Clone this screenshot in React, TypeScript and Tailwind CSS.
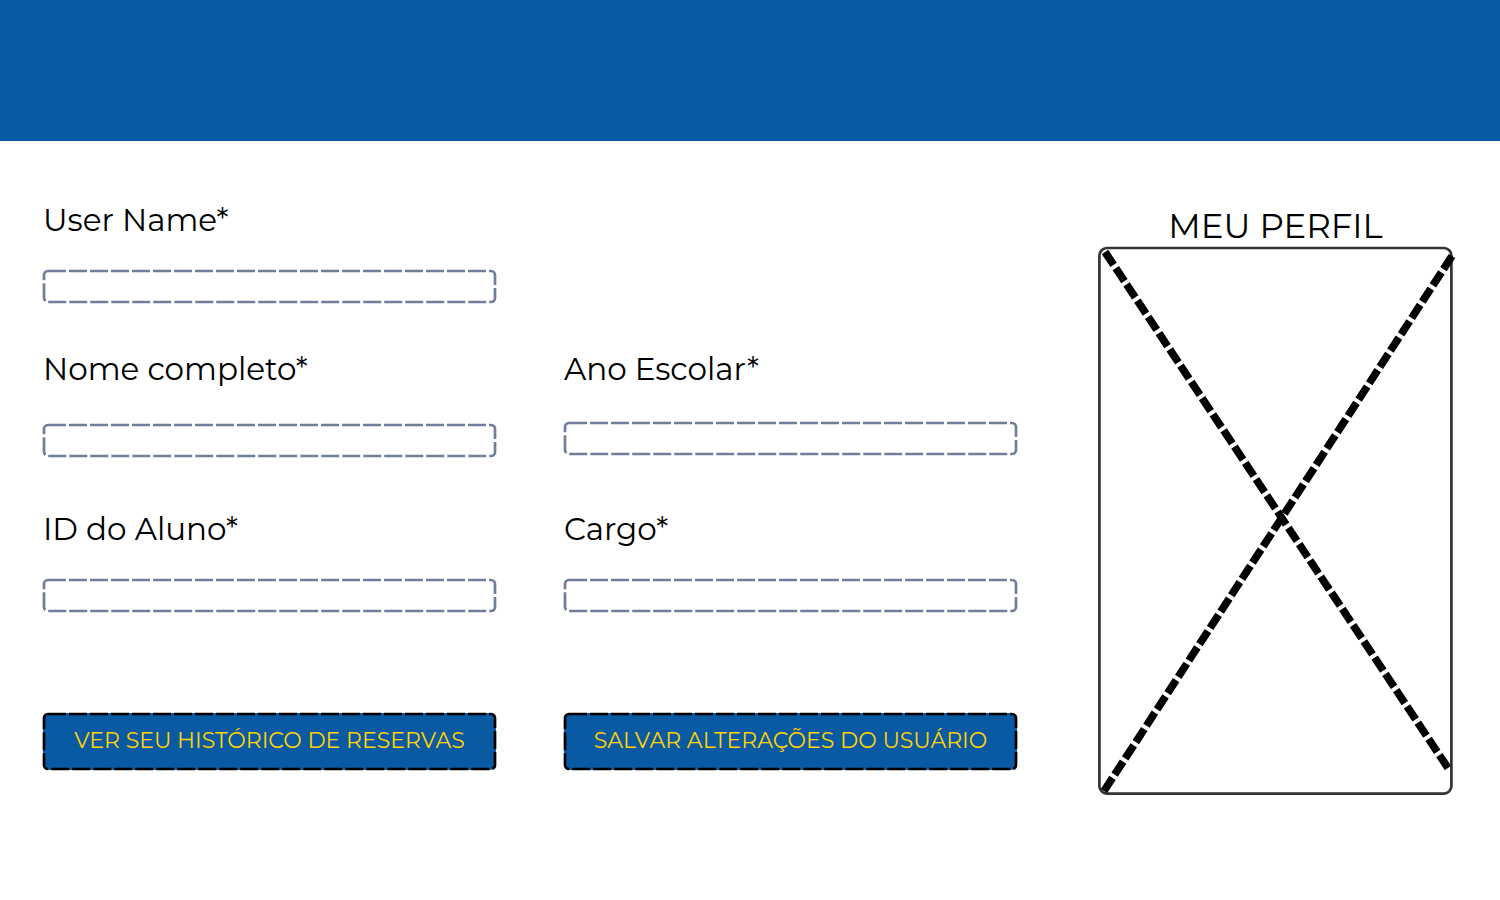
import type { ReactNode } from 'react';

function DashedBorder({ className }: { className: string }) {
  return (
    <span className="pointer-events-none absolute inset-px" aria-hidden="true">
      <svg className={`block h-full w-full overflow-visible ${className}`}>
        <rect
          width="100%"
          height="100%"
          rx="4"
          fill="none"
          stroke="currentColor"
          strokeWidth="2.7"
          strokeDasharray="18 3"
        />
      </svg>
    </span>
  );
}

function Field({ id, label, gap = 'gap-[30px]' }: { id: string; label: string; gap?: string }) {
  return (
    <div className={`flex flex-col ${gap}`}>
      <label htmlFor={id} className="text-[31px] leading-10 whitespace-nowrap">
        {label}
      </label>
      <div className="relative h-[33px]">
        <input
          id={id}
          name={id}
          type="text"
          className="block h-full w-full rounded-md bg-transparent px-3 text-base outline-none"
        />
        <DashedBorder className="text-[#707d9b]" />
      </div>
    </div>
  );
}

function ActionButton({ children }: { children: ReactNode }) {
  return (
    <button
      type="button"
      className="relative h-[57px] w-full cursor-pointer rounded-md bg-[#0a5aa3] pb-0.5 text-[22px] whitespace-nowrap text-[#ffd200]"
    >
      {children}
      <DashedBorder className="text-black" />
    </button>
  );
}

function ProfilePlaceholder() {
  return (
    <svg viewBox="0 0 355 548" className="block h-auto w-full overflow-visible" aria-hidden="true">
      <rect x="1.4" y="1" width="352" height="545.6" rx="7.5" fill="none" stroke="#333333" strokeWidth="2.7" />
      <g stroke="#000000" strokeWidth="7.7" strokeDasharray="4 1">
        <line x1="7" y1="5" x2="350" y2="521" pathLength="159" />
        <line x1="6" y1="544" x2="354" y2="9" pathLength="164" />
      </g>
    </svg>
  );
}

export default function App() {
  return (
    <div className="min-h-screen bg-white font-['Montserrat','Inter',sans-serif] text-black">
      <header className="h-[141px] bg-[#0a5aa3]" />
      <main className="grid grid-cols-[974fr_355fr] items-start gap-x-[81px] pr-[47px] pb-10 pl-[43px]">
        <form className="grid grid-cols-2 gap-x-[68px] pt-[59px]">
          <div className="col-start-1">
            <Field id="username" label="User Name*" />
          </div>
          <div className="col-start-1 pt-[46px]">
            <Field id="fullname" label="Nome completo*" gap="gap-[35px]" />
          </div>
          <div className="pt-[46px]">
            <Field id="year" label="Ano Escolar*" gap="gap-[33px]" />
          </div>
          <div className="pt-[52px]">
            <Field id="student" label="ID do Aluno*" />
          </div>
          <div className="pt-[52px]">
            <Field id="role" label="Cargo*" />
          </div>
          <div className="pt-[101px]">
            <ActionButton>VER SEU HISTÓRICO DE RESERVAS</ActionButton>
          </div>
          <div className="pt-[101px]">
            <ActionButton>SALVAR ALTERAÇÕES DO USUÁRIO</ActionButton>
          </div>
        </form>
        <section className="pt-[65px]">
          <h1 className="text-center text-[34px] leading-[41px] whitespace-nowrap">MEU PERFIL</h1>
          <ProfilePlaceholder />
        </section>
      </main>
    </div>
  );
}
